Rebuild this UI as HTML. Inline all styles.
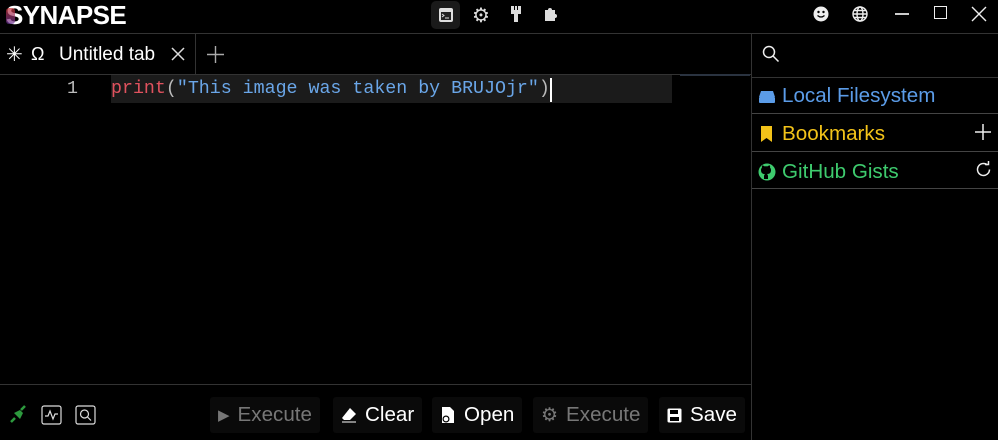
<!DOCTYPE html>
<html><head><meta charset="utf-8"><style>
*{margin:0;padding:0;box-sizing:border-box}
body{width:998px;height:440px;background:#000;font-family:"Liberation Sans",sans-serif;color:#fff;position:relative;overflow:hidden}
.a{position:absolute}
.hl{background:#333;height:1px}
.vl{background:#333;width:1px}
.btn{position:absolute;top:397px;height:36px;display:flex;align-items:center;gap:8px;font-size:20.6px;padding:0 8px;background:#0a0a0a;border-radius:3px}
.side{position:absolute;left:758px;display:flex;align-items:center;font-size:20.6px;gap:6px}
</style></head><body>
<!-- title -->
<div class="a" style="left:6px;top:0px;font-size:26px;font-weight:bold;letter-spacing:-0.6px">SYNAPSE</div>
<div class="a" style="left:6px;top:8px;width:9px;height:16px;background:linear-gradient(#c33,#639);opacity:.7;border-radius:3px"></div>
<div class="a" style="left:431px;top:1px;width:29px;height:28px;background:#1a1a1a;border-radius:5px"></div>
<svg class="a" style="left:438px;top:7px" width="16" height="16" viewBox="0 0 16 16"><rect x="1" y="1" width="14" height="14" rx="2" fill="#ddd"/><rect x="3" y="5" width="10" height="8" fill="#222"/><path d="M4 7l2 1.5-2 1.5M7 11h4" stroke="#ddd" fill="none"/></svg>
<div class="a" style="left:472px;top:3px;font-size:20px;color:#ddd">⚙</div>
<svg class="a" style="left:509px;top:5px" width="14" height="18"><rect x="2" y="1" width="10" height="8" fill="#ddd"/><rect x="5" y="1" width="1" height="4" fill="#000"/><rect x="8" y="1" width="1" height="4" fill="#000"/><rect x="5" y="9" width="4" height="8" fill="#ddd"/></svg>
<svg class="a" style="left:543px;top:6px" width="16" height="16"><path d="M2 4h3a2 2 0 1 1 4 0h3v4a2 2 0 1 1 0 4v3H2z" fill="#ddd"/></svg>
<svg class="a" style="left:813px;top:6px" width="16" height="16"><circle cx="8" cy="8" r="7.5" fill="#eee"/><circle cx="5.5" cy="6" r="1.2" fill="#000"/><circle cx="10.5" cy="6" r="1.2" fill="#000"/><path d="M4.5 9.5q3.5 3 7 0" stroke="#000" fill="none" stroke-width="1.3"/></svg>
<svg class="a" style="left:851px;top:5px" width="18" height="18" fill="none" stroke="#eee" stroke-width="1.4"><circle cx="9" cy="9" r="7"/><ellipse cx="9" cy="9" rx="3" ry="7"/><path d="M2 9h14M3 5.5h12M3 12.5h12"/></svg>
<div class="a" style="left:895px;top:13px;width:14px;height:1.5px;background:#ccc"></div>
<div class="a" style="left:934px;top:6px;width:13px;height:13px;border:1.5px solid #eee"></div>
<svg class="a" style="left:971px;top:6px" width="16" height="16" stroke="#eee" stroke-width="1.4"><path d="M1 1l14 14M15 1L1 15"/></svg>
<div class="a hl" style="left:0;top:33px;width:998px"></div>
<!-- tabs -->
<div class="a" style="left:6px;top:42px;font-size:20px">✳</div>
<div class="a" style="left:31px;top:44px;font-size:18px">Ω</div>
<div class="a" style="left:59px;top:44px;font-size:19px">Untitled tab</div>
<svg class="a" style="left:171px;top:47px" width="14" height="14" stroke="#ddd" stroke-width="1.5"><path d="M1 1l12 12M13 1L1 13"/></svg>
<div class="a vl" style="left:195px;top:34px;height:40px"></div>
<svg class="a" style="left:207px;top:46px" width="17" height="17" stroke="#aaa" stroke-width="1.4"><path d="M8.5 0v17M0 8.5h17"/></svg>
<div class="a hl" style="left:0;top:74px;width:751px"></div>
<!-- editor -->
<div class="a" style="left:111px;top:75px;width:561px;height:28px;background:#1b1b1b"></div>
<div class="a" style="left:680px;top:74px;width:70px;height:2px;background:#2a3340"></div>
<div class="a" style="left:67px;top:79px;font-family:'Liberation Mono',monospace;font-size:18.3px;color:#bbb">1</div>
<div class="a" style="left:111px;top:79px;font-family:'Liberation Mono',monospace;font-size:18.3px;white-space:pre"><span style="color:#e0525e">print</span><span style="color:#bbb">(</span><span style="color:#6aa6e8">"This image was taken by BRUJOjr"</span><span style="color:#bbb">)</span></div>
<div class="a" style="left:550px;top:78px;width:2px;height:24px;background:#fff"></div>
<!-- sidebar -->
<div class="a vl" style="left:751px;top:34px;height:406px"></div>
<svg class="a" style="left:762px;top:45px" width="18" height="18" fill="none" stroke="#eee" stroke-width="1.5"><circle cx="7" cy="7" r="5.5"/><path d="M11 11l5.5 5.5"/></svg>
<div class="a hl" style="left:752px;top:77px;width:246px"></div>
<div class="side" style="top:84px;color:#5b9ce8"><svg width="18" height="16"><path d="M3 3h12l2 6H1z" fill="#5b9ce8"/><rect x="1" y="9" width="16" height="6" rx="1" fill="#5b9ce8"/></svg>Local Filesystem</div>
<div class="a hl" style="left:752px;top:113px;width:246px;background:#444"></div>
<div class="side" style="top:122px;color:#f3c319"><svg width="18" height="18"><path d="M3 1h11v16l-5.5-4L3 17z" fill="#f3c319"/></svg>Bookmarks</div>
<svg class="a" style="left:975px;top:124px" width="16" height="16" stroke="#eee" stroke-width="1.5"><path d="M8 0v16M0 8h16"/></svg>
<div class="a hl" style="left:752px;top:151px;width:246px;background:#444"></div>
<div class="side" style="top:160px;color:#3ecb6e"><svg width="18" height="18" viewBox="0 0 18 18"><circle cx="9" cy="9" r="8.5" fill="#3ecb6e"/><path d="M6 16v-3c0-1 1-2 1-2-3 0-4-1.5-4-4 0-1 .4-1.8 1-2.4-.2-.6-.2-1.5.2-2.2 1 0 1.8.6 2.3 1a7 7 0 0 1 3 0c.5-.4 1.3-1 2.3-1 .4.7.4 1.6.2 2.2.6.6 1 1.4 1 2.4 0 2.5-1 4-4 4 0 0 1 1 1 2v3z" fill="#000"/></svg>GitHub Gists</div>
<svg class="a" style="left:975px;top:161px" width="17" height="17" fill="none" stroke="#eee" stroke-width="1.5"><path d="M14.5 8.5A6 6 0 1 1 12.5 4"/><path d="M10 3.5h3.5V0" /></svg>
<div class="a hl" style="left:752px;top:188px;width:246px;background:#444"></div>
<!-- bottom -->
<div class="a hl" style="left:0;top:384px;width:751px"></div>
<svg class="a" style="left:8px;top:404px" width="20" height="20"><path d="M3 18l4-4M17 2l-4 4" stroke="#2d9a3e" stroke-width="2.5"/><path d="M6 9l6-3 3 3-3 6z" fill="#2d9a3e"/></svg>
<svg class="a" style="left:41px;top:405px" width="21" height="20" fill="none" stroke="#ddd" stroke-width="1.2"><rect x="1" y="1" width="19" height="18" rx="2"/><path d="M4 11h3l2-5 3 8 2-5h3"/></svg>
<svg class="a" style="left:75px;top:405px" width="21" height="20" fill="none" stroke="#ddd" stroke-width="1.2"><rect x="1" y="1" width="19" height="18" rx="2"/><circle cx="9.5" cy="9" r="4"/><path d="M12.5 12l3.5 3.5"/></svg>
<div class="btn" style="left:210px;color:#777"><span style="font-size:15px">▶</span>Execute</div>
<div class="btn" style="left:333px"><svg width="16" height="16"><path d="M9 1l6 6-6 6H3L1 11z" fill="#fff"/><path d="M1 15h14" stroke="#fff"/></svg>Clear</div>
<div class="btn" style="left:432px"><svg width="16" height="18"><path d="M2 1h8l4 4v12H2z" fill="#fff"/><circle cx="6" cy="13" r="3.5" fill="#000"/><circle cx="6" cy="13" r="2.3" fill="#fff"/></svg>Open</div>
<div class="btn" style="left:533px;color:#777"><span style="font-size:19px">⚙</span>Execute</div>
<div class="btn" style="left:659px"><svg width="15" height="15"><rect x="0.5" y="0.5" width="14" height="14" rx="1.5" fill="#fff"/><rect x="3" y="2" width="8" height="4" fill="#000"/><rect x="3" y="9" width="9" height="4" fill="#000"/></svg>Save</div>
</body></html>
